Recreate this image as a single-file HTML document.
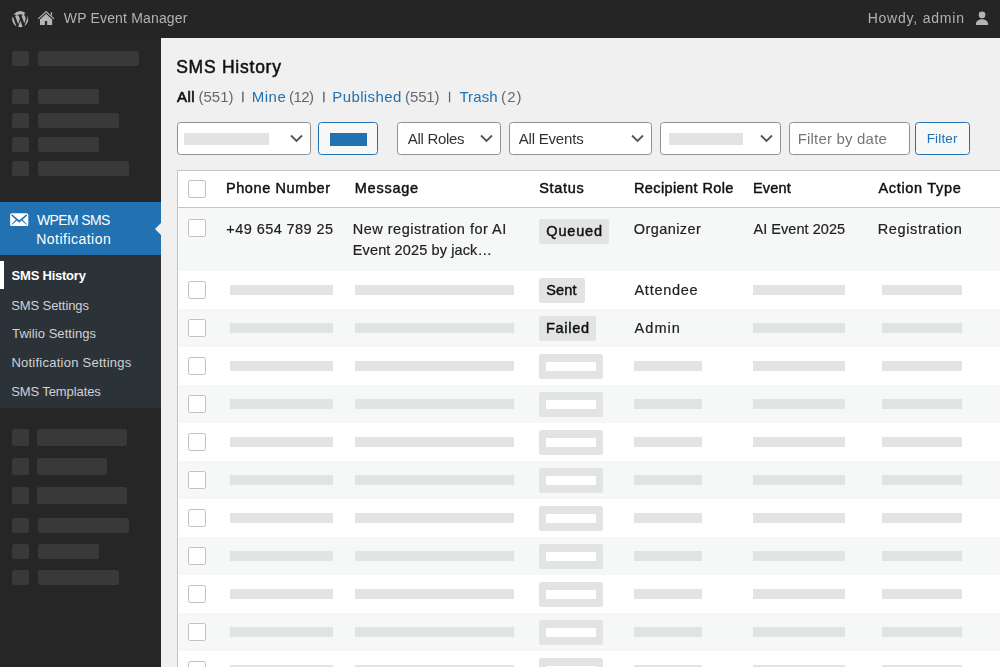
<!DOCTYPE html>
<html lang="en">
<head>
<meta charset="utf-8">
<title>SMS History ‹ WP Event Manager — WordPress</title>
<style>
*{box-sizing:border-box;margin:0;padding:0}
html,body{width:1000px;height:667px;overflow:hidden}
body{background:#f0f0f1;font-family:"Liberation Sans",sans-serif;color:#1d2327;position:relative}
a{text-decoration:none;color:inherit}
ul{list-style:none}
#wpbody,#adminbar .site,#adminbar .howdy{transform:translateZ(0)}

/* ---------- admin bar ---------- */
#adminbar{position:absolute;left:0;top:0;width:1000px;height:38px;background:#252525;color:#b2b2b2;font-size:14px}
#adminbar svg{position:absolute;display:block}
#adminbar .site,#adminbar .howdy{position:absolute;top:8.400px;line-height:20px;white-space:nowrap}

/* ---------- admin menu ---------- */
#adminmenu{position:absolute;left:0;top:38px;width:161px;height:629px;background:#262626}
#adminmenu .sk{position:absolute;left:12px;width:17px;height:15px;border-radius:2.500px;background:#393939}
#adminmenu .sk i{position:absolute;left:26px;top:0;height:100%;border-radius:2.500px;background:#393939;display:block}
#adminmenu .current{position:absolute;left:0;top:163.600px;width:161px;height:53.700px;background:#2271b1;color:#fff;font-size:14px;line-height:19px}
#adminmenu .current svg{position:absolute;left:7.800px;top:7.500px}
#adminmenu .current .name{position:absolute;white-space:nowrap}
#adminmenu .current:after{content:"";position:absolute;right:0;top:21.100px;border:6px solid transparent;border-right:6px solid #f0f0f1;border-left:0}
#adminmenu .submenu{position:absolute;left:0;top:217.300px;width:161px;height:152.700px;background:#2c3338;color:#d0d1d4;font-size:13px}
#adminmenu .submenu li{position:absolute;white-space:nowrap;line-height:18px}
#adminmenu .submenu li.on{color:#fff;font-weight:bold}
#adminmenu .submenu li.bar{left:0;top:5.700px;width:4px;height:28.500px;background:#fff}

/* ---------- content ---------- */
#wpbody{position:absolute;left:161px;top:38px;width:839px;height:629px}
h1{position:absolute;top:15.600px;font-size:17.500px;font-weight:normal;line-height:26px;color:#111;-webkit-text-stroke:.5px #111;white-space:nowrap}
.subsubsub{position:absolute;left:16px;top:48px;font-size:15px;line-height:22px;color:#646970;white-space:nowrap}
.subsubsub a,.subsubsub span{position:absolute;top:0;white-space:nowrap}
.subsubsub a{color:#2271b1}
.subsubsub .cur{color:#111;font-weight:normal;-webkit-text-stroke:.65px #111}
.subsubsub .sep{color:#50575e;font-size:10px;top:-.200px;-webkit-text-stroke:.4px #50575e}

.tablenav{position:absolute;left:0;top:84px;width:839px;height:33px}
.ctl{position:absolute;top:0;height:32.700px;border:1px solid #8c8f94;border-radius:3.500px;background:#fff;font-size:15px;line-height:30px;color:#2c3338;white-space:nowrap}
.ctl svg{position:absolute;top:11.200px;right:6.900px;display:block}
.ctl .ph{position:absolute;left:7px;top:10px;height:11.500px;background:#e2e3e5;display:block}
.ctl .lbl{position:absolute;top:.500px}
.btn{border-color:#2271b1;background:#f6f7f7;color:#2271b1}
.btn .ph{background:#2271b1}

/* ---------- table ---------- */
table{position:absolute;left:16px;top:132px;width:840px;border-collapse:separate;border-spacing:0;table-layout:fixed;border:1px solid #c3c4c7;border-right:0;background:#fff;font-size:14px;color:#222}
th,td{padding:0;text-align:left;vertical-align:top;font-weight:normal;white-space:nowrap;position:relative}
thead th{height:36.800px;border-bottom:1px solid #c3c4c7;font-weight:normal;font-size:14.500px;color:#111;-webkit-text-stroke:.45px #111}
tbody tr{height:38px}
tbody tr.odd{background:#f6f7f7}
tbody tr.tall{height:63px}
.cb{display:block;position:absolute;left:10px;width:18px;height:18px;border:1px solid #bfc1c6;border-radius:2.200px;background:#fff}
.tx{position:absolute;display:block;white-space:nowrap;line-height:21px}
tbody .tx{font-size:14.500px;-webkit-text-stroke:.2px #222}
.sk1{position:absolute;display:block;top:14.200px;height:9.800px;background:#e2e3e5}
.badge{position:absolute;display:block;left:8px;top:7.100px;height:25px;border-radius:2.500px;background:#e2e3e5;font-weight:normal;font-size:14.500px;line-height:25px;color:#111;-webkit-text-stroke:.45px #111}
.badge .bt{position:absolute;top:0;white-space:nowrap}
.badge.empty{width:64px}
.badge.empty:after{content:"";position:absolute;left:7px;top:8px;width:50px;height:9px;background:#fff}
</style>
</head>
<body>

<div id="adminbar">
  <svg style="left:10.880px;top:9.530px" width="18.450" height="18.450" viewBox="0 0 20 20"><circle cx="10" cy="10" r="8.950" fill="#b4b4b4"/><path fill="#252525" d="M20 10c0-5.51-4.49-10-10-10C4.48 0 0 4.49 0 10c0 5.52 4.48 10 10 10 5.51 0 10-4.48 10-10zM7.78 15.37L4.37 6.22c.55-.02 1.17-.08 1.17-.08.5-.06.44-1.13-.06-1.11 0 0-1.45.11-2.37.11-.18 0-.37 0-.58-.01C4.12 2.69 6.87 1.11 10 1.11c2.33 0 4.45.87 6.05 2.34-.68-.11-1.65.39-1.65 1.58 0 .74.45 1.36.9 2.1.35.61.55 1.36.55 2.46 0 1.49-1.4 5-1.4 5l-3.03-8.37c.54-.02.82-.17.82-.17.5-.05.44-1.25-.06-1.22 0 0-1.44.12-2.38.12-.87 0-2.33-.12-2.33-.12-.5-.03-.56 1.2-.06 1.22l.92.08 1.26 3.41zM17.41 10c.24-.64.74-1.87.43-4.25.7 1.29 1.05 2.71 1.05 4.25 0 3.29-1.73 6.24-4.4 7.78.97-2.59 1.94-5.2 2.92-7.78zM6.1 18.09C3.12 16.65 1.11 13.53 1.11 10c0-1.3.23-2.48.72-3.59C3.25 10.3 4.67 14.2 6.1 18.09zm4.03-6.63l2.58 6.98c-.86.29-1.76.45-2.71.45-.79 0-1.57-.11-2.29-.33.81-2.38 1.62-4.74 2.42-7.1z"/></svg>
  <svg style="left:36px;top:9px" width="20" height="20" viewBox="0 0 20 20"><path d="M2.500 9.700L10.100 2.600L17.700 9.700" fill="none" stroke="#b4b4b4" stroke-width="1.100" stroke-linecap="round" stroke-linejoin="miter"/><path fill="#b4b4b4" d="M14.800 3.200h1.300v3.800l-1.300-1.200zM10.100 4.800l6.100 5.700V16h-5.100v-3.900H8.900V16H4v-5.500z"/></svg>
  <a class="site" id="t_site" style="left:63.77px;letter-spacing:0.17px">WP Event Manager</a>
  <span class="howdy" id="t_howdy" style="left:867.64px;letter-spacing:0.79px">Howdy, admin</span>
  <svg style="left:974px;top:9px" width="16" height="18" viewBox="0 0 16 18"><circle cx="8.050" cy="5.900" r="3.300" fill="#b4b4b4"/><path fill="#b4b4b4" d="M1.800 15.600C1.800 12.300 4.400 10.200 8 10.200s6.200 2.100 6.200 5.400c0 .3-.2.500-.5.500H2.300c-.3 0-.5-.2-.5-.5z"/></svg>
</div>

<div id="adminmenu">
  <div class="sk" style="top:13px"><i style="width:101px"></i></div>
  <div class="sk" style="top:51px"><i style="width:61px"></i></div>
  <div class="sk" style="top:75px"><i style="width:81px"></i></div>
  <div class="sk" style="top:99px"><i style="width:61px"></i></div>
  <div class="sk" style="top:123px"><i style="width:91px"></i></div>

  <a class="current">
    <svg width="21.400" height="21.400" viewBox="0 0 20 20"><path fill="#fff" d="M19 14.500v-9c0-.830-.670-1.500-1.500-1.500H3.490c-.830 0-1.500.670-1.500 1.500v9c0 .830.670 1.500 1.500 1.500H17.500c.830 0 1.500-.670 1.500-1.500zm-1.310-9.110c.330.330.150.670-.030.840L13.600 9.950l3.900 4.060c.120.140.200.360.060.510-.130.160-.430.150-.560.050l-4.370-3.730-2.140 1.950-2.130-1.950-4.370 3.730c-.130.100-.430.110-.560-.050-.140-.150-.060-.370.060-.510l3.900-4.060-4.060-3.720c-.180-.170-.360-.510-.030-.840s.670-.170.950.070l6.240 5.040 6.250-5.040c.280-.240.620-.400.950-.070z"/></svg>
    <span class="name" id="t_wpem" style="left:37.00px;top:9.40px;letter-spacing:-0.65px">WPEM SMS</span>
    <span class="name" id="t_notif" style="left:36.29px;top:28.40px;letter-spacing:0.47px">Notification</span>
  </a>
  <ul class="submenu">
    <li class="bar" aria-hidden="true"></li>
    <li class="on" id="t_sub1" style="left:11.61px;top:12.10px;letter-spacing:-0.23px">SMS History</li>
    <li id="t_sub2" style="left:11.14px;top:41.60px;letter-spacing:-0.08px">SMS Settings</li>
    <li id="t_sub3" style="left:12.10px;top:70.10px;letter-spacing:0.06px">Twilio Settings</li>
    <li id="t_sub4" style="left:11.39px;top:99.10px;letter-spacing:0.25px">Notification Settings</li>
    <li id="t_sub5" style="left:11.14px;top:128.10px;letter-spacing:-0.09px">SMS Templates</li>
  </ul>

  <div class="sk" style="top:391px;height:17px"><i style="left:25px;width:90px"></i></div>
  <div class="sk" style="top:420px;height:17px"><i style="left:25px;width:70px"></i></div>
  <div class="sk" style="top:449px;height:17px"><i style="left:25px;width:90px"></i></div>
  <div class="sk" style="top:480px"><i style="width:91px"></i></div>
  <div class="sk" style="top:506px"><i style="width:61px"></i></div>
  <div class="sk" style="top:532px"><i style="width:81px"></i></div>
</div>

<div id="wpbody">
  <h1 id="t_h1" style="left:15.14px;letter-spacing:0.76px">SMS History</h1>
  <ul class="subsubsub">
    <li><a class="cur" id="t_all" style="left:-0.03px;letter-spacing:0.52px">All</a> <span id="t_c1" style="left:21.46px;letter-spacing:0.02px">(551)</span> <span class="sep" id="t_s1" style="left:64.61px;letter-spacing:0.00px">|</span></li>
    <li><a id="t_mine" style="left:74.66px;letter-spacing:0.53px">Mine</a> <span id="t_c2" style="left:112.12px;letter-spacing:-0.62px">(12)</span> <span class="sep" id="t_s2" style="left:145.61px;letter-spacing:0.00px">|</span></li>
    <li><a id="t_pub" style="left:155.25px;letter-spacing:0.40px">Published</a> <span id="t_c3" style="left:228.12px;letter-spacing:-0.14px">(551)</span> <span class="sep" id="t_s3" style="left:271.15px;letter-spacing:0.00px">|</span></li>
    <li><a id="t_trash" style="left:282.40px;letter-spacing:0.10px">Trash</a> <span id="t_c4" style="left:324.12px;letter-spacing:1.03px">(2)</span></li>
  </ul>

  <div class="tablenav">
    <div class="ctl" style="left:16px;width:134px"><span class="ph" style="left:6px;width:85px"></span><svg width="13" height="9" viewBox="0 0 13 9"><path d="M1 1.500l5.500 5.500 5.500-5.500" fill="none" stroke="#555" stroke-width="1.850"/></svg></div>
    <div class="ctl btn" style="left:157px;width:60px"><span class="ph" style="left:11px;width:37px;height:12.800px"></span></div>
    <div class="ctl" style="left:236px;width:104px"><span class="lbl" id="t_roles" style="left:9.68px;letter-spacing:-0.28px">All Roles</span><svg width="13" height="9" viewBox="0 0 13 9"><path d="M1 1.500l5.500 5.500 5.500-5.500" fill="none" stroke="#555" stroke-width="1.850"/></svg></div>
    <div class="ctl" style="left:348px;width:143px"><span class="lbl" id="t_events" style="left:8.68px;letter-spacing:-0.19px">All Events</span><svg width="13" height="9" viewBox="0 0 13 9"><path d="M1 1.500l5.500 5.500 5.500-5.500" fill="none" stroke="#555" stroke-width="1.850"/></svg></div>
    <div class="ctl" style="left:499px;width:121px"><span class="ph" style="left:8px;width:74px"></span><svg width="13" height="9" viewBox="0 0 13 9"><path d="M1 1.500l5.500 5.500 5.500-5.500" fill="none" stroke="#555" stroke-width="1.850"/></svg></div>
    <div class="ctl" style="left:628px;width:121px;color:#72777c"><span class="lbl" id="t_fdate" style="left:7.66px;letter-spacing:0.19px">Filter by date</span></div>
    <div class="ctl btn" style="left:754px;width:55px;font-size:13.500px"><span class="lbl" id="t_filter" style="left:10.64px;letter-spacing:0.18px">Filter</span></div>
  </div>

  <table>
    <colgroup><col style="width:40px"><col style="width:127px"><col style="width:186px"><col style="width:95px"><col style="width:119px"><col style="width:125px"><col style="width:147px"></colgroup>
    <thead>
      <tr>
        <th><span class="cb" style="top:9px"></span></th>
        <th><span class="tx" id="t_h_phone" style="left:7.91px;top:7px;letter-spacing:0.60px">Phone Number</span></th>
        <th><span class="tx" id="t_h_msg" style="left:9.72px;top:7px;letter-spacing:0.76px">Message</span></th>
        <th><span class="tx" id="t_h_status" style="left:8.24px;top:7px;letter-spacing:0.67px">Status</span></th>
        <th><span class="tx" id="t_h_role" style="left:7.91px;top:7px;letter-spacing:0.40px">Recipient Role</span></th>
        <th><span class="tx" id="t_h_event" style="left:7.91px;top:7px;letter-spacing:0.19px">Event</span></th>
        <th><span class="tx" id="t_h_action" style="left:8.44px;top:7px;letter-spacing:0.68px">Action Type</span></th>
      </tr>
    </thead>
    <tbody>
      <tr class="odd tall">
        <td><span class="cb" style="top:11.200px"></span></td>
        <td><span class="tx" id="t_phone" style="left:8.30px;top:11px;letter-spacing:0.43px">+49 654 789 25</span></td>
        <td><span class="tx" id="t_m1" style="left:7.79px;top:11px;letter-spacing:0.49px">New registration for AI</span><span class="tx" id="t_m2" style="left:7.79px;top:32px;letter-spacing:0.12px">Event 2025 by jack…</span></td>
        <td><span class="badge" style="top:11.200px;width:70px"><span class="bt" id="t_queued" style="left:7.33px;letter-spacing:0.81px">Queued</span></span></td>
        <td><span class="tx" id="t_org" style="left:7.78px;top:11px;letter-spacing:0.43px">Organizer</span></td>
        <td><span class="tx" id="t_ev" style="left:8.47px;top:11px;letter-spacing:0.05px">AI Event 2025</span></td>
        <td><span class="tx" id="t_reg" style="left:7.79px;top:11px;letter-spacing:0.61px">Registration</span></td>
      </tr>
      <tr>
        <td><span class="cb" style="top:10.200px"></span></td>
        <td><span class="sk1" style="left:12px;width:103px"></span></td>
        <td><span class="sk1" style="left:10px;width:159px"></span></td>
        <td><span class="badge" style="width:46px"><span class="bt" id="t_sent" style="left:7.25px;letter-spacing:0.14px">Sent</span></span></td>
        <td><span class="tx" id="t_att" style="left:8.47px;top:9px;letter-spacing:0.73px">Attendee</span></td>
        <td><span class="sk1" style="left:8px;width:92px"></span></td>
        <td><span class="sk1" style="left:12px;width:80px"></span></td>
      </tr>
      <tr class="odd">
        <td><span class="cb" style="top:10.200px"></span></td>
        <td><span class="sk1" style="left:12px;width:103px"></span></td>
        <td><span class="sk1" style="left:10px;width:159px"></span></td>
        <td><span class="badge" style="width:57px"><span class="bt" id="t_failed" style="left:6.93px;letter-spacing:0.73px">Failed</span></span></td>
        <td><span class="tx" id="t_adm" style="left:8.47px;top:9px;letter-spacing:1.09px">Admin</span></td>
        <td><span class="sk1" style="left:8px;width:92px"></span></td>
        <td><span class="sk1" style="left:12px;width:80px"></span></td>
      </tr>
      <tr>
        <td><span class="cb" style="top:10.200px"></span></td>
        <td><span class="sk1" style="left:12px;width:103px"></span></td>
        <td><span class="sk1" style="left:10px;width:159px"></span></td>
        <td><span class="badge empty"></span></td>
        <td><span class="sk1" style="left:8px;width:68px"></span></td>
        <td><span class="sk1" style="left:8px;width:92px"></span></td>
        <td><span class="sk1" style="left:12px;width:80px"></span></td>
      </tr>
      <tr class="odd">
        <td><span class="cb" style="top:10.200px"></span></td>
        <td><span class="sk1" style="left:12px;width:103px"></span></td>
        <td><span class="sk1" style="left:10px;width:159px"></span></td>
        <td><span class="badge empty"></span></td>
        <td><span class="sk1" style="left:8px;width:68px"></span></td>
        <td><span class="sk1" style="left:8px;width:92px"></span></td>
        <td><span class="sk1" style="left:12px;width:80px"></span></td>
      </tr>
      <tr>
        <td><span class="cb" style="top:10.200px"></span></td>
        <td><span class="sk1" style="left:12px;width:103px"></span></td>
        <td><span class="sk1" style="left:10px;width:159px"></span></td>
        <td><span class="badge empty"></span></td>
        <td><span class="sk1" style="left:8px;width:68px"></span></td>
        <td><span class="sk1" style="left:8px;width:92px"></span></td>
        <td><span class="sk1" style="left:12px;width:80px"></span></td>
      </tr>
      <tr class="odd">
        <td><span class="cb" style="top:10.200px"></span></td>
        <td><span class="sk1" style="left:12px;width:103px"></span></td>
        <td><span class="sk1" style="left:10px;width:159px"></span></td>
        <td><span class="badge empty"></span></td>
        <td><span class="sk1" style="left:8px;width:68px"></span></td>
        <td><span class="sk1" style="left:8px;width:92px"></span></td>
        <td><span class="sk1" style="left:12px;width:80px"></span></td>
      </tr>
      <tr>
        <td><span class="cb" style="top:10.200px"></span></td>
        <td><span class="sk1" style="left:12px;width:103px"></span></td>
        <td><span class="sk1" style="left:10px;width:159px"></span></td>
        <td><span class="badge empty"></span></td>
        <td><span class="sk1" style="left:8px;width:68px"></span></td>
        <td><span class="sk1" style="left:8px;width:92px"></span></td>
        <td><span class="sk1" style="left:12px;width:80px"></span></td>
      </tr>
      <tr class="odd">
        <td><span class="cb" style="top:10.200px"></span></td>
        <td><span class="sk1" style="left:12px;width:103px"></span></td>
        <td><span class="sk1" style="left:10px;width:159px"></span></td>
        <td><span class="badge empty"></span></td>
        <td><span class="sk1" style="left:8px;width:68px"></span></td>
        <td><span class="sk1" style="left:8px;width:92px"></span></td>
        <td><span class="sk1" style="left:12px;width:80px"></span></td>
      </tr>
      <tr>
        <td><span class="cb" style="top:10.200px"></span></td>
        <td><span class="sk1" style="left:12px;width:103px"></span></td>
        <td><span class="sk1" style="left:10px;width:159px"></span></td>
        <td><span class="badge empty"></span></td>
        <td><span class="sk1" style="left:8px;width:68px"></span></td>
        <td><span class="sk1" style="left:8px;width:92px"></span></td>
        <td><span class="sk1" style="left:12px;width:80px"></span></td>
      </tr>
      <tr class="odd">
        <td><span class="cb" style="top:10.200px"></span></td>
        <td><span class="sk1" style="left:12px;width:103px"></span></td>
        <td><span class="sk1" style="left:10px;width:159px"></span></td>
        <td><span class="badge empty"></span></td>
        <td><span class="sk1" style="left:8px;width:68px"></span></td>
        <td><span class="sk1" style="left:8px;width:92px"></span></td>
        <td><span class="sk1" style="left:12px;width:80px"></span></td>
      </tr>
      <tr>
        <td><span class="cb" style="top:10.200px"></span></td>
        <td><span class="sk1" style="left:12px;width:103px"></span></td>
        <td><span class="sk1" style="left:10px;width:159px"></span></td>
        <td><span class="badge empty"></span></td>
        <td><span class="sk1" style="left:8px;width:68px"></span></td>
        <td><span class="sk1" style="left:8px;width:92px"></span></td>
        <td><span class="sk1" style="left:12px;width:80px"></span></td>
      </tr>
    </tbody>
  </table>
</div>

</body>
</html>
